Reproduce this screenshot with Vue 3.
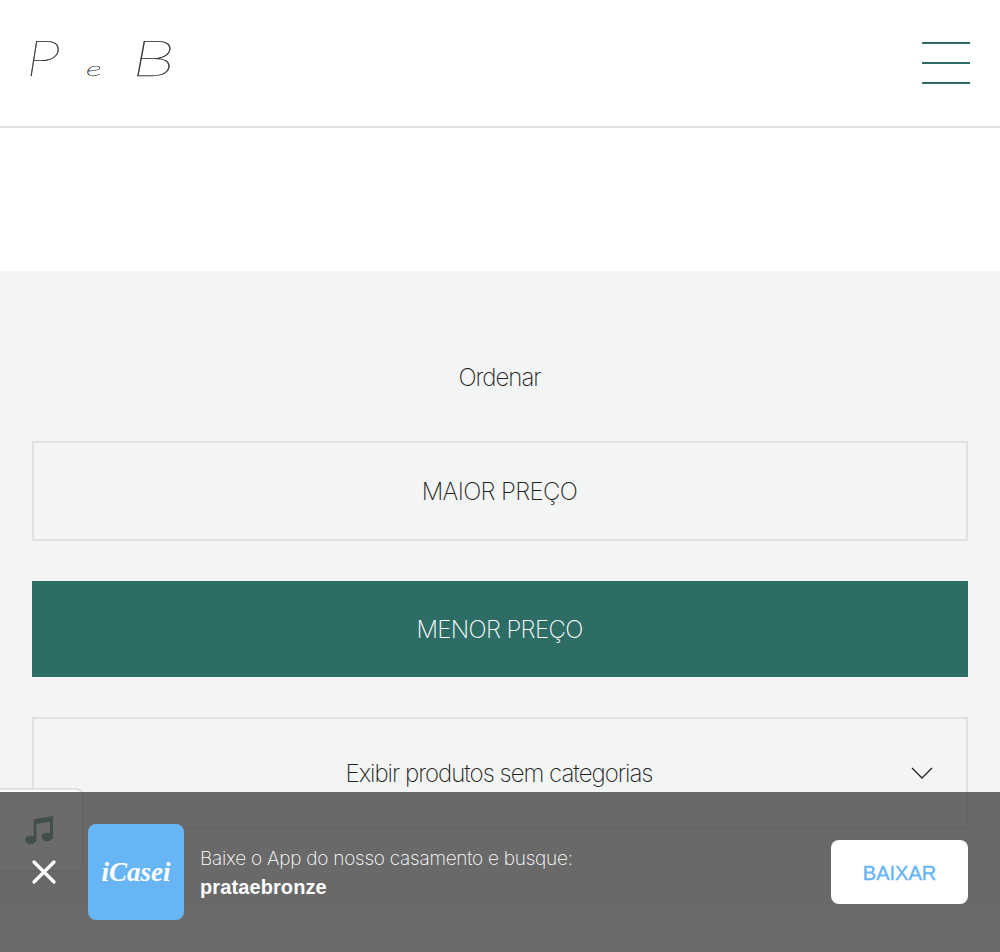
<script setup>
const sortOptions = [
  { label: 'MAIOR PREÇO', active: false },
  { label: 'MENOR PREÇO', active: true }
]
</script>

<template>
  <div class="page">
    <header class="header">
      <a class="logo"><span class="initial first">P</span><span class="joiner">e</span><span class="initial last">B</span></a>
      <button class="menu" aria-label="Menu"><i></i><i></i><i></i></button>
    </header>
    <main class="filters">
      <h2 class="title">Ordenar</h2>
      <button v-for="o in sortOptions" :key="o.label" class="option" :class="{ active: o.active }">{{ o.label }}</button>
      <div class="select">
        <span>Exibir produtos sem categorias</span>
        <svg class="chevron" width="22" height="13" viewBox="0 0 22 13"><path d="M1 1 L11 11 L21 1" fill="none" stroke="#222" stroke-width="1.3" /></svg>
      </div>
    </main>
    <div class="music">
      <svg width="30" height="30" viewBox="0 0 30 30" fill="#2d6d66">
        <path d="M8.7 3.2 L28 0 V21 H25 V5.8 L11.4 8 V24 H8.7 Z" />
        <ellipse cx="5.7" cy="23.9" rx="5.7" ry="4.2" />
        <ellipse cx="22.3" cy="21" rx="5.7" ry="4.2" />
      </svg>
    </div>
    <aside class="banner">
      <svg class="close" width="24" height="24" viewBox="0 0 24 24"><path d="M2 2 L22 22 M22 2 L2 22" stroke="#fff" stroke-width="3.2" stroke-linecap="round" /></svg>
      <div class="app-icon">iCasei</div>
      <div class="copy">
        <p>Baixe o App do nosso casamento e busque:</p>
        <strong>prataebronze</strong>
      </div>
      <button class="download">BAIXAR</button>
    </aside>
  </div>
</template>

<style>
body { margin: 0; overflow: hidden; }
</style>

<style scoped>
* { box-sizing: border-box; }
button { border: 0; margin: 0; padding: 0; background: none; font: inherit; color: inherit; }
.page { position: relative; height: 952px; overflow: hidden; background: #fff; color: #222; font-family: Inter, "Liberation Sans", sans-serif; font-weight: 200; }
.header { height: 128px; padding: 0 30px 0 26px; border-bottom: 2px solid #dfe0e0; display: flex; justify-content: space-between; align-items: center; }
.logo { display: grid; grid-template-columns: 60px 46px 44px; align-items: baseline; height: 46px; line-height: 46px; font-family: Lato, sans-serif; font-style: italic; font-weight: 100; color: #222; margin-top: -12px; -webkit-text-stroke: .25px #222; }
.logo span { display: block; transform-origin: left; }
.initial { font-size: 50px; }
.first { transform: scaleX(1.3); }
.joiner { font-size: 20px; transform: scaleX(1.7); }
.last { transform: scaleX(1.5); }
.menu { width: 48px; height: 42px; display: flex; flex-direction: column; justify-content: space-between; }
.menu i { height: 2px; background: #2d6d66; }
.filters { margin-top: 143px; height: 639px; padding: 92px 32px 0; background: #f3f5f4; display: flex; flex-direction: column; font-size: 24px; letter-spacing: -1px; text-align: center; }
.title { margin: 0 1px 48px 0; height: 30px; line-height: 30px; font-size: 24px; font-weight: 200; }
.option { height: 100px; border: 2px solid #dfe0e0; margin-bottom: 40px; padding: 1px 1px 0 0; letter-spacing: -.65px; }
.option.active { height: 96px; background: #2d6d66; border: 0; color: #fff; }
.select { position: relative; height: 112px; border: 2px solid #dfe0e0; padding-right: 2px; line-height: 110px; }
.chevron { position: absolute; right: 33px; top: 48px; }
.music { position: absolute; left: -12px; top: 788px; width: 96px; height: 84px; padding: 26px 0 0 35px; border: 2px solid #dfe0e0; border-radius: 8px; background: #fff; }
.music svg { display: block; }
.banner { position: absolute; left: 0; right: 0; bottom: 0; height: 160px; padding: 0 32px; background: rgba(70, 70, 70, .8); display: flex; align-items: center; color: #fff; }
.app-icon { width: 96px; height: 96px; margin-left: 32px; border-radius: 8px; background: #67b5f5; display: flex; align-items: center; justify-content: center; font-family: cursive; font-style: italic; font-weight: 700; font-size: 27px; }
.copy { margin-left: 16px; padding-top: 2px; font-size: 19px; }
.copy p { margin: 0; height: 29px; line-height: 29px; letter-spacing: -.24px; }
.copy strong { display: block; height: 29px; line-height: 29px; font-family: "Liberation Sans", sans-serif; font-weight: 700; font-size: 20px; letter-spacing: .1px; }
.download { margin-left: auto; width: 137px; height: 64px; padding-top: 2px; border-radius: 8px; background: #fff; color: #67b5f5; font-family: "Liberation Sans", sans-serif; font-size: 20px; font-weight: 400; -webkit-text-stroke: .4px #67b5f5; }
</style>
